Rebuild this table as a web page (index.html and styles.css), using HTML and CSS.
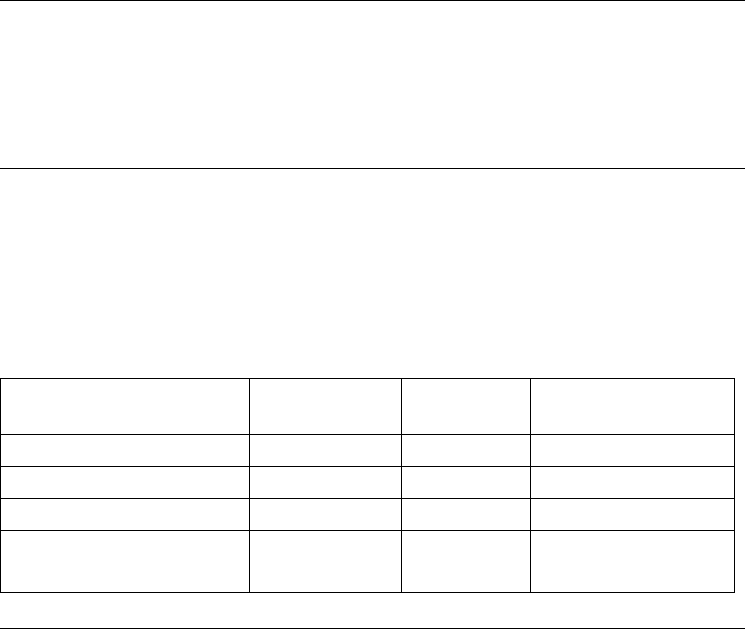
FILE: index.html
```html
<!DOCTYPE html>
<html>
<head>
<meta charset="utf-8">
<link rel="stylesheet" href="styles.css">
</head>
<body>
<div class="page">
  <header class="banner"></header>
  <main class="content">
    <table class="grid">
      <colgroup>
        <col class="c1"><col class="c2"><col class="c3"><col class="c4">
      </colgroup>
      <tr class="head"><td></td><td></td><td></td><td></td></tr>
      <tr class="row"><td></td><td></td><td></td><td></td></tr>
      <tr class="row"><td></td><td></td><td></td><td></td></tr>
      <tr class="row"><td></td><td></td><td></td><td></td></tr>
      <tr class="last"><td></td><td></td><td></td><td></td></tr>
    </table>
  </main>
  <footer class="foot"></footer>
</div>
</body>
</html>
```
FILE: styles.css
```css
html, body {
  margin: 0;
  padding: 0;
  background: #fff;
  font-family: "Liberation Sans", Arial, sans-serif;
}
.page {
  display: flex;
  flex-direction: column;
}
.banner {
  height: 167px;
  border-top: 1px solid #000;
  border-bottom: 1px solid #000;
}
.content {
  padding-top: 209px;
}
.grid {
  border-collapse: collapse;
  table-layout: fixed;
  width: 734px;
}
.grid td {
  border: 1px solid #000;
  padding: 0;
}
.c1 { width: 249px; }
.c2 { width: 152px; }
.c3 { width: 129px; }
.c4 { width: 204px; }
.head td { height: 55px; }
.row td { height: 31px; }
.last td { height: 61px; }
.foot {
  margin-top: 35px;
  border-top: 1px solid #000;
}
```
